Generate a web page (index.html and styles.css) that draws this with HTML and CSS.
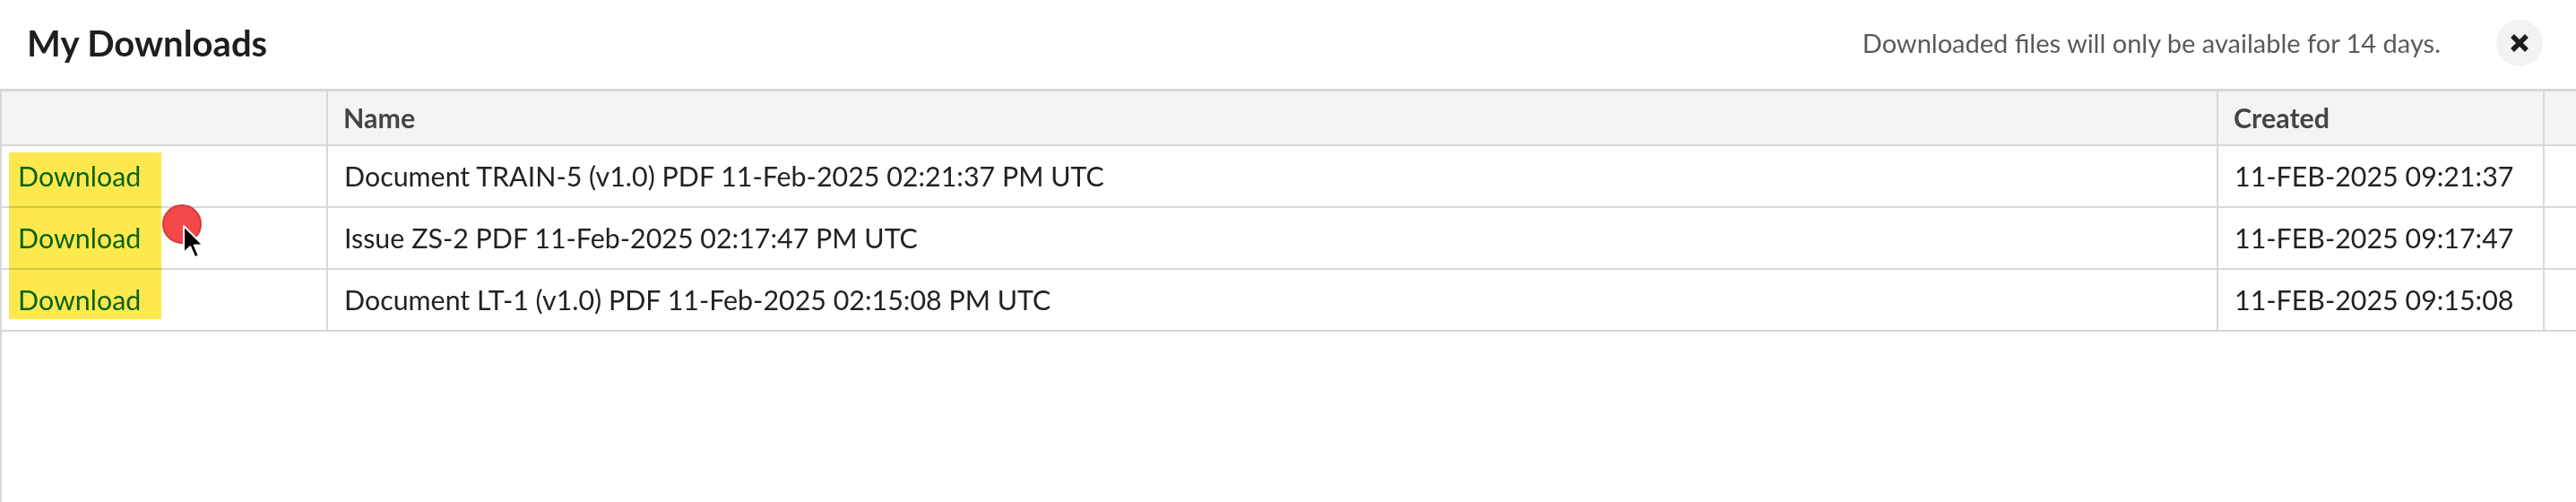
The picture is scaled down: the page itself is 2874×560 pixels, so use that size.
FILE: index.html
```html
<!DOCTYPE html>
<html lang="en">
<head>
    <meta charset="UTF-8">
    <meta name="viewport" content="width=device-width, initial-scale=1.0">
    <title>My Downloads</title>
    <link rel="stylesheet" href="styles.css">
</head>
<body>
    <div class="modal">
        <header class="modal-head">
            <h2 class="modal-title">My Downloads</h2>
            <div class="modal-tools">
                <span class="notice">Downloaded files will only be available for 14 days.</span>
                <button class="close-btn" aria-label="Close">
                    <svg width="22" height="22" viewBox="0 0 22 22">
                        <path d="M3 3 L19 19 M19 3 L3 19" stroke="#1e1e1e" stroke-width="5.5" fill="none"/>
                    </svg>
                </button>
            </div>
        </header>

        <div class="grid-wrap">
            <table class="downloads">
                <thead>
                    <tr>
                        <th class="col-action"></th>
                        <th class="col-name">Name</th>
                        <th class="col-created">Created</th>
                        <th class="col-extra"></th>
                    </tr>
                </thead>
                <tbody>
                    <tr>
                        <td><a href="#" class="dl-link">Download</a></td>
                        <td>Document TRAIN-5 (v1.0) PDF 11-Feb-2025 02:21:37 PM UTC</td>
                        <td>11-FEB-2025 09:21:37</td>
                        <td></td>
                    </tr>
                    <tr>
                        <td><a href="#" class="dl-link">Download</a></td>
                        <td>Issue ZS-2 PDF 11-Feb-2025 02:17:47 PM UTC</td>
                        <td>11-FEB-2025 09:17:47</td>
                        <td></td>
                    </tr>
                    <tr>
                        <td><a href="#" class="dl-link">Download</a></td>
                        <td>Document LT-1 (v1.0) PDF 11-Feb-2025 02:15:08 PM UTC</td>
                        <td>11-FEB-2025 09:15:08</td>
                        <td></td>
                    </tr>
                </tbody>
            </table>

            <!-- marker over the download links -->
            <div class="highlight"></div>

            <!-- click indicator + pointer -->
            <div class="click-dot"></div>
            <svg class="pointer" width="26" height="40" viewBox="0 0 13 20">
                <path d="M1 1 L1 16 L4.6 12.6 L7.2 18.6 L9.4 17.6 L6.9 11.8 L11.8 11.8 Z" fill="#000" stroke="#fff" stroke-width="1" stroke-linejoin="round"/>
            </svg>
        </div>
    </div>
</body>
</html>
```

FILE: styles.css
```css
* {
    margin: 0;
    padding: 0;
    box-sizing: border-box;
}

body {
    font-family: 'Lato', 'Open Sans', sans-serif;
    background: #fff;
    color: #222;
    overflow: hidden;
}

.modal {
    width: 100%;
    height: 100vh;
    display: flex;
    flex-direction: column;
}

.modal-head {
    height: 99px;
    padding: 0 37px 3px 30px;
    display: flex;
    align-items: center;
    justify-content: space-between;
}

.modal-title {
    font-size: 40px;
    line-height: 48px;
    font-weight: 700;
    color: #1e1e1e;
}

.modal-tools {
    display: flex;
    align-items: center;
    gap: 62px;
}

.notice {
    font-size: 29px;
    line-height: 36px;
    color: #5a5a5a;
}

.close-btn {
    width: 52px;
    height: 52px;
    border: none;
    border-radius: 50%;
    background: #f2f2f2;
    display: flex;
    align-items: center;
    justify-content: center;
    cursor: pointer;
}

.grid-wrap {
    position: relative;
    flex: 1;
    border-top: 3px solid #d8d8d8;
    border-left: 2px solid #d8d8d8;
}

.downloads {
    width: 100%;
    table-layout: fixed;
    border-collapse: separate;
    border-spacing: 0;
    font-size: 30.4px;
    line-height: 36px;
}

.downloads th,
.downloads td {
    text-align: left;
    white-space: nowrap;
    overflow: hidden;
    border-right: 2px solid #d8d8d8;
    border-bottom: 2px solid #d8d8d8;
}

.downloads th:last-child,
.downloads td:last-child {
    border-right: none;
}

.downloads th {
    background: #f4f4f4;
    color: #444;
    font-weight: 700;
    padding: 11px 17px 12px;
}

.downloads td {
    color: #222;
    padding: 15px 18px 16px;
}

.col-action { width: 364px; }
.col-name { width: 2109px; }
.col-created { width: 364px; }

.dl-link {
    color: #0b6a3a;
    text-decoration: none;
}

.highlight {
    position: absolute;
    left: 8px;
    top: 68px;
    width: 170px;
    height: 186px;
    background: #fde94f;
    mix-blend-mode: multiply;
    pointer-events: none;
}

.click-dot {
    position: absolute;
    left: 179px;
    top: 126px;
    width: 44px;
    height: 44px;
    border-radius: 50%;
    background: #f24848;
    border: 2px solid #d23c3c;
}

.pointer {
    position: absolute;
    left: 201px;
    top: 148px;
}
```
